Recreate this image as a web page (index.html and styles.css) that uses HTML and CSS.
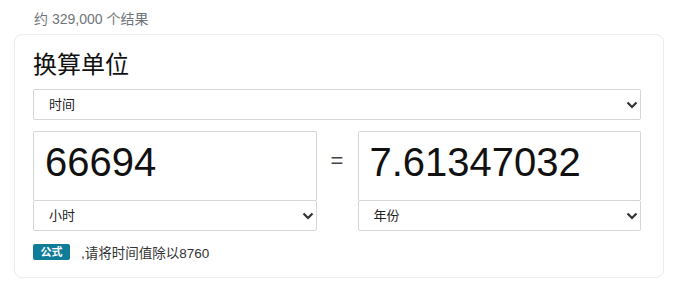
FILE: index.html
```html
<!DOCTYPE html>
<html lang="zh">
<head>
<meta charset="utf-8">
<link rel="stylesheet" href="styles.css">
</head>
<body>
<div class="stats">约 329,000 个结果</div>
<div class="card">
  <h2 class="title">换算单位</h2>
  <div class="sel-wrap full">
    <select class="sel"><option>时间</option></select>
    <svg class="chev" width="12" height="8" viewBox="0 0 12 8"><path d="M1.5 1.5 L6 6 L10.5 1.5" fill="none" stroke="#333" stroke-width="2.2"/></svg>
  </div>
  <div class="row">
    <div class="col">
      <div class="val">66694</div>
      <div class="sel-wrap">
        <select class="sel"><option>小时</option></select>
        <svg class="chev" width="12" height="8" viewBox="0 0 12 8"><path d="M1.5 1.5 L6 6 L10.5 1.5" fill="none" stroke="#333" stroke-width="2.2"/></svg>
      </div>
    </div>
    <div class="eq">=</div>
    <div class="col">
      <div class="val">7.61347032</div>
      <div class="sel-wrap">
        <select class="sel"><option>年份</option></select>
        <svg class="chev" width="12" height="8" viewBox="0 0 12 8"><path d="M1.5 1.5 L6 6 L10.5 1.5" fill="none" stroke="#333" stroke-width="2.2"/></svg>
      </div>
    </div>
  </div>
  <div class="formula"><span class="badge">公式</span><span class="ftext">,请将时间值除以8760</span></div>
</div>
</body>
</html>
```
FILE: styles.css
```css
body {
  margin: 0;
  padding: 0 15px 0 14px;
  font-family: Arial, "Liberation Sans", "Noto Sans CJK SC", sans-serif;
  background: #fff;
  color: #222;
}
.stats {
  font-size: 14px;
  color: #70757a;
  padding: 10px 0 0 20px;
  height: 24px;
  line-height: 18px;
  box-sizing: border-box;
}
.card {
  margin-top: 10px;
  border: 1px solid #ececec;
  border-radius: 8px;
  padding: 15px 22px 19px 18px;
  height: 244px;
  box-sizing: border-box;
}
.title {
  margin: 0;
  font-weight: normal;
  font-size: 24px;
  line-height: 30px;
  color: #111;
  height: 39px;
}
.sel-wrap {
  position: relative;
}
.sel {
  appearance: none;
  -webkit-appearance: none;
  width: 100%;
  height: 31px;
  border: 1px solid #d6d6d6;
  border-radius: 2px;
  background: #fff;
  font-family: Arial, "Liberation Sans", "Noto Sans CJK SC", sans-serif;
  font-size: 13px;
  color: #222;
  padding: 0 0 0 15px;
  margin: 0;
  display: block;
}
.chev {
  position: absolute;
  right: 3px;
  top: 12px;
  pointer-events: none;
}
.row {
  display: flex;
  margin-top: 11px;
}
.col {
  flex: 1;
}
.val {
  height: 69px;
  border: 1px solid #d6d6d6;
  border-bottom: none;
  border-radius: 2px 2px 0 0;
  box-sizing: border-box;
  font-size: 40px;
  line-height: 40px;
  padding: 10px 0 0 11px;
  color: #111;
}
.eq {
  width: 41px;
  text-align: center;
  font-size: 22px;
  color: #444;
  padding-top: 17px;
}
.formula {
  display: flex;
  align-items: center;
  margin-top: 11px;
}
.badge {
  background: #0f7d98;
  color: #fff;
  font-size: 11px;
  font-weight: bold;
  width: 37px;
  height: 16px;
  line-height: 16px;
  text-align: center;
  border-radius: 2px;
}
.ftext {
  margin-left: 11px;
  font-size: 13.5px;
  color: #333;
}
```
